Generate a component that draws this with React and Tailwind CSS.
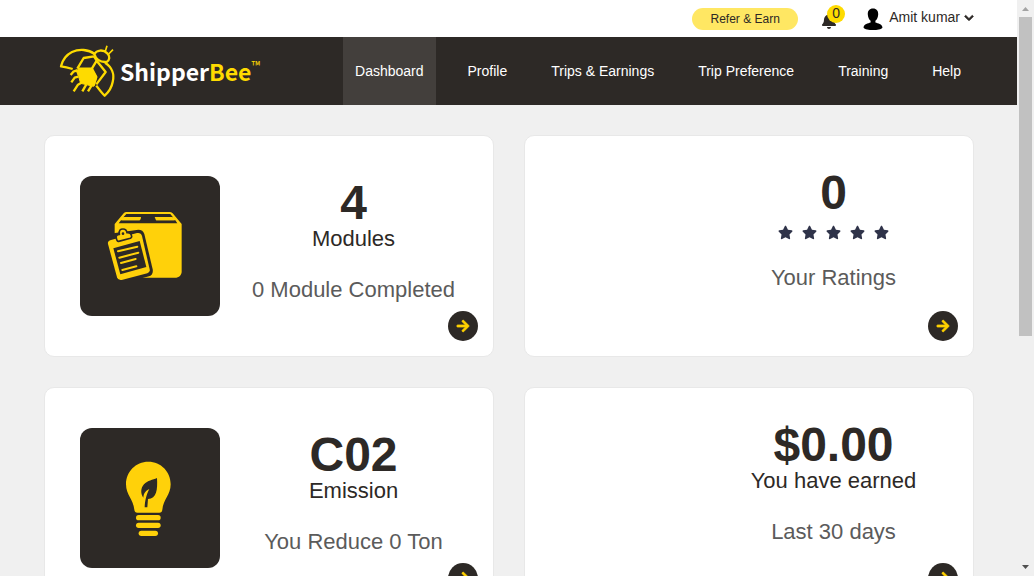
import React from "react";
import { FaBell, FaStar, FaArrowRight, FaChevronDown } from "react-icons/fa";

const NAV = ["Dashboard", "Profile", "Trips & Earnings", "Trip Preference", "Training", "Help"];

function Bee() {
  return (
    <svg viewBox="6 6 174 162" className="h-[54px] w-[58px] shrink-0" fill="none" stroke="#fedb00" strokeWidth="7" strokeLinejoin="round" strokeLinecap="butt" aria-hidden="true">
      <path d="M50 81C38 77 26 74 15 73C19 56 32 38 48 30C70 20 97 22 116 36" />
      <path d="M114 43L83 48L64 80" />
      <path d="M114 43L122 56M66 80L108 79L122 56L149 90L121 127" />
      <path d="M108 80L121 105L113 131" />
      <path d="M60 84L107 79L122 105L113 133L74 124L68 104Z" fill="#fedb00" strokeWidth="3" />
      <path d="M63 85L52 89L44 99M67 104L56 107L46 121M76 122L66 128L53 148M91 127L79 148M107 130L96 148" />
      <path d="M147 62C168 75 176 97 170 120C167 137 157 151 146 161C137 153 130 143 121 131" />
      <path d="M115 36C122 24 141 21 154 34C163 43 161 55 152 60C135 61 120 53 115 36Z" fill="#2d2926" />
      <path d="M148 28L153 11M158 36L171 23" strokeWidth="5" />
    </svg>
  );
}

function BoxIcon() {
  return (
    <svg viewBox="15 18 420 420" className="size-full" aria-hidden="true">
      <path fill="#ffd10a" d="M119 162L146 130Q149 126 155 126H283Q289 126 293 130L320 162V307Q318 322 304 323H119Z" />
      <path fill="#2d2926" d="M154 132H286L294 142H243V149Q243 151 246 151H301L307 160H131L138 151H192Q195 151 196 148L198 142H145Z" />
      <path fill="#ffd10a" d="M147 141H198L195 151H140ZM239 141H291L298 151H243Z" />
      <path fill="#2d2926" d="M115 190L190 179Q204 179 208 192L233 298Q236 314 222 319L200 325H115Z" />
      <path fill="#ffd10a" d="M108 210L186 189Q198 187 201 198L224 298Q226 307 217 310L140 330Q129 332 126 322L99 222Q97 213 108 210Z" />
      <path fill="#2d2926" d="M115 235L194 213L214 291L136 313Z" />
      <path d="M129 244L187 230M133 263L190 248M138 279L182 267M142 300L184 289" stroke="#ffd10a" strokeWidth="6" strokeLinecap="round" />
      <path d="M124 205C122 197 126 194 133 193C131 180 137 177 144 177C152 177 155 182 156 188C164 187 169 191 170 200Q170 203 166 205L131 214Q126 215 124 205Z" fill="#ffd10a" stroke="#2d2926" strokeWidth="5" />
      <circle cx="144" cy="191" r="4" fill="#2d2926" />
    </svg>
  );
}

function BulbIcon() {
  return (
    <svg viewBox="15 12 420 420" className="size-full" aria-hidden="true">
      <path fill="#ffd10a" d="M220 113C182 113 153 143 153 181C153 214 175 225 178 257Q179 266 187 266H253Q261 266 262 257C265 225 287 214 287 181C287 143 258 113 220 113Z" />
      <rect x="183" y="273" width="74" height="16" rx="8" fill="#ffd10a" />
      <rect x="183" y="296" width="74" height="16" rx="8" fill="#ffd10a" />
      <rect x="191" y="320" width="58" height="16" rx="8" fill="#ffd10a" />
      <path fill="#2d2926" d="M246 162C248 197 245 224 219 225L217 250H209C210 233 212 216 223 195C211 200 206 209 205 221C196 208 197 192 207 181C218 169 233 168 246 162Z" />
    </svg>
  );
}

function UserIcon() {
  return (
    <svg viewBox="0 0 20 22" className="h-[22px] w-5" aria-hidden="true">
      <path d="M10 0.5C13.6 0.5 15.4 3 15.2 6.5C15 9.3 14 11.5 12.4 12.8V14.6C15 15.6 19 16 19.5 19.5C18.5 21.4 14 22 10 22S1.5 21.4 0.5 19.5C1 16 5 15.6 7.6 14.6V12.8C6 11.5 5 9.3 4.8 6.5C4.6 3 6.4 0.5 10 0.5Z" />
    </svg>
  );
}

function Card({ icon, value, label, stars, note }) {
  return (
    <section className="relative flex h-[222px] rounded-[10px] border border-[#e8e8e8] bg-white pr-1.5 pl-[35px]">
      <div className={icon ? "mt-10 size-[140px] shrink-0 overflow-hidden rounded-xl bg-[#2d2926]" : "size-[140px] shrink-0"}>{icon}</div>
      <div className={icon ? "flex-1 pt-[46px] text-center" : "flex-1 pt-9 text-center"}>
        <h2 className="text-[48px] leading-[42px] font-bold text-[#2d2926]">{value}</h2>
        {label && <div className="text-[22px] leading-[30px] text-[#2d2926]">{label}</div>}
        {stars && (
          <div className="flex h-7 items-end justify-center gap-[9px] pb-0.5 text-[#2f3349]">
            {[1, 2, 3, 4, 5].map((n) => <FaStar key={n} className="size-[15px]" />)}
          </div>
        )}
        <p className="mt-[21px] text-[22px] leading-[30px] text-[#5b5b5b]">{note}</p>
      </div>
      <a href="#details" aria-label={`Open ${note}`} className="absolute right-[15px] bottom-[15px] flex size-[30px] items-center justify-center rounded-full bg-[#2d2926] text-[#ffd100]">
        <FaArrowRight className="size-3.5 stroke-current stroke-[24px]" />
      </a>
    </section>
  );
}

export default function App() {
  return (
    <div className="flex h-screen overflow-hidden bg-[#f0f0f0] font-['Liberation_Sans',Arial,sans-serif] text-[#2d2926]">
      <div className="min-w-0 flex-1">
        <div className="flex h-[37px] items-center justify-end bg-white pr-[43px]">
          <a href="#refer" className="flex h-[22px] min-w-[106px] items-center justify-center rounded-full bg-[#ffe763] px-4 text-[12px]">Refer &amp; Earn</a>
          <button type="button" aria-label="Notifications" className="relative mr-[26px] ml-[23px]">
            <FaBell className="mt-1 size-4" />
            <span className="absolute -top-1 left-[6px] flex size-[18px] items-center justify-center rounded-full bg-[#fedb00] text-[14px]">0</span>
          </button>
          <button type="button" className="flex items-center text-[14px]">
            <UserIcon />
            <span className="mb-1 ml-1.5 flex items-center gap-1 leading-4">
              Amit kumar
              <FaChevronDown className="mt-0.5 size-2.5 stroke-current stroke-[40px]" />
            </span>
          </button>
        </div>
        <header className="flex h-[68px] items-center justify-between bg-[#2d2926] pr-11 pl-[58px]">
          <a href="#home" className="flex items-center font-['Noto_Sans_CJK_SC',sans-serif] text-[23px] leading-8 font-bold text-white">
            <Bee />
            <span className="ml-1">Shipper<span className="text-[#fedb00]">Bee</span></span>
            <span className="mb-3 text-[12px] leading-3 font-normal text-[#fedb00]">™</span>
          </a>
          <nav className="flex h-full gap-5 text-[14px] text-white">
            {NAV.map((item, i) => (
              <a key={item} href="#nav" className={i === 0 ? "flex items-center bg-[#433f3c] px-3 whitespace-nowrap" : "flex items-center px-3 whitespace-nowrap"}>{item}</a>
            ))}
          </nav>
        </header>
        <main className="grid grid-cols-2 gap-x-[30px] gap-y-[30px] pt-[30px] pr-[43px] pl-11">
          <Card icon={<BoxIcon />} value="4" label="Modules" note="0 Module Completed" />
          <Card value="0" stars note="Your Ratings" />
          <Card icon={<BulbIcon />} value="C02" label="Emission" note="You Reduce 0 Ton" />
          <Card value="$0.00" label="You have earned" note="Last 30 days" />
        </main>
      </div>
      <div className="flex w-[17px] shrink-0 flex-col items-center bg-[#f0f0f0]" aria-hidden="true">
        <svg viewBox="0 0 17 17" className="size-[17px]" fill="#a3a3a3"><path d="M5 11H12L8.5 7Z" /></svg>
        <div className="h-[319px] w-[13px] bg-[#c1c1c1]" />
        <svg viewBox="0 0 17 17" className="mt-auto size-[17px]" fill="#505050"><path d="M5 6H12L8.5 10Z" /></svg>
      </div>
    </div>
  );
}
